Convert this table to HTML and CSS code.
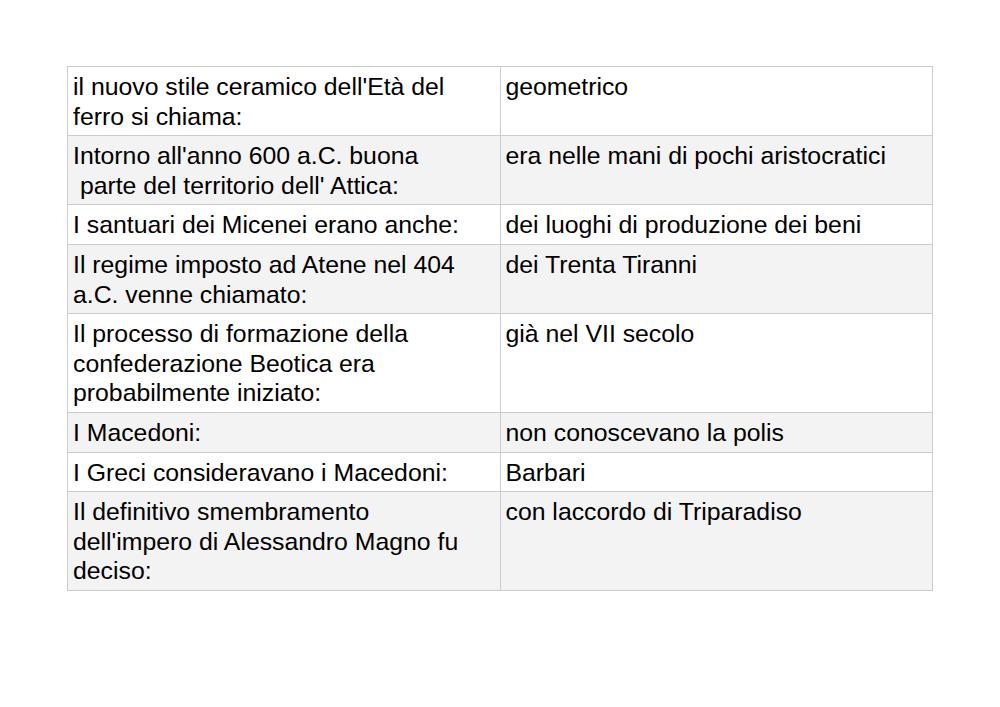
FILE: index.html
```html
<!DOCTYPE html>
<html lang="it">
<head>
<meta charset="utf-8">
<title>Quiz</title>
<link rel="stylesheet" href="styles.css">
</head>
<body>
<table class="qa">
<tr class="odd"><td>il nuovo stile ceramico dell'Età del ferro si chiama:</td><td>geometrico</td></tr>
<tr class="even"><td>Intorno all'anno 600 a.C. buona<br>&nbsp;parte del territorio dell' Attica:</td><td>era nelle mani di pochi aristocratici</td></tr>
<tr class="odd"><td>I santuari dei Micenei erano anche:</td><td>dei luoghi di produzione dei beni</td></tr>
<tr class="even"><td>Il regime imposto ad Atene nel 404 a.C. venne chiamato:</td><td>dei Trenta Tiranni</td></tr>
<tr class="odd"><td>Il processo di formazione della confederazione Beotica era probabilmente iniziato:</td><td>già nel VII secolo</td></tr>
<tr class="even"><td>I Macedoni:</td><td>non conoscevano la polis</td></tr>
<tr class="odd"><td>I Greci consideravano i Macedoni:</td><td>Barbari</td></tr>
<tr class="even"><td>Il definitivo smembramento dell'impero di Alessandro Magno fu deciso:</td><td>con laccordo di Triparadiso</td></tr>
</table>
</body>
</html>
```
FILE: styles.css
```css
html, body {
  margin: 0;
  padding: 0;
  background: #ffffff;
}
body {
  padding: 66px 0 0 67px;
  font-family: "Liberation Sans", Arial, sans-serif;
  color: #000;
}
.qa {
  border-collapse: collapse;
  width: 866px;
  table-layout: fixed;
  font-size: 24.8px;
  line-height: 29.6px;
}
.qa td {
  width: 50%;
  border: 1px solid #cccccc;
  padding: 5px 5px 4px 5px;
  vertical-align: top;
}
.qa tr.even td {
  background: #f3f3f3;
}
```
